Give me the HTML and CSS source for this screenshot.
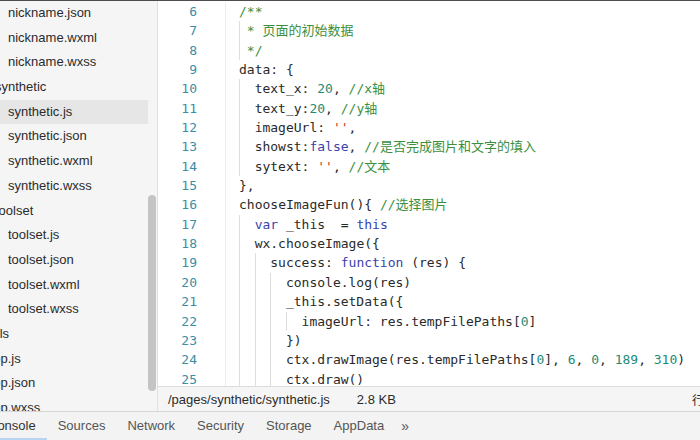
FILE: index.html
```html
<!DOCTYPE html>
<html lang="zh-CN">
<head>
    <meta charset="UTF-8">
    <title>synthetic.js</title>
    <link rel="stylesheet" href="styles.css">
</head>
<body>
    <div class="main">
        <div class="sidebar">
            <div class="tree">
                <div class="row file">nickname.json</div>
                <div class="row file">nickname.wxml</div>
                <div class="row file">nickname.wxss</div>
                <div class="row folder">synthetic</div>
                <div class="row file selected">synthetic.js</div>
                <div class="row file">synthetic.json</div>
                <div class="row file">synthetic.wxml</div>
                <div class="row file">synthetic.wxss</div>
                <div class="row folder">toolset</div>
                <div class="row file">toolset.js</div>
                <div class="row file">toolset.json</div>
                <div class="row file">toolset.wxml</div>
                <div class="row file">toolset.wxss</div>
                <div class="row root">utils</div>
                <div class="row root">app.js</div>
                <div class="row root">app.json</div>
                <div class="row root">app.wxss</div>
            </div>
            <div class="thumb"></div>
        </div>

        <div class="editor">
            <div class="code">
                <div class="gutter">
                    <div>6</div><div>7</div><div>8</div><div>9</div><div>10</div>
                    <div>11</div><div>12</div><div>13</div><div>14</div><div>15</div>
                    <div>16</div><div>17</div><div>18</div><div>19</div><div>20</div>
                    <div>21</div><div>22</div><div>23</div><div>24</div><div>25</div>
                </div>
                <div class="lines">
                    <div class="ln"><span class="c">/**</span></div>
                    <div class="ln"><i class="g g1"></i><span class="c">* 页面的初始数据</span></div>
                    <div class="ln"><i class="g g1"></i><span class="c">*/</span></div>
                    <div class="ln">data: {</div>
                    <div class="ln"><i class="g"></i>text_x: <span class="n">20</span>, <span class="c">//x轴</span></div>
                    <div class="ln"><i class="g"></i>text_y:<span class="n">20</span>, <span class="c">//y轴</span></div>
                    <div class="ln"><i class="g"></i>imageUrl: <span class="s">''</span>,</div>
                    <div class="ln"><i class="g"></i>showst:<span class="k">false</span>, <span class="c">//是否完成图片和文字的填入</span></div>
                    <div class="ln"><i class="g"></i>sytext: <span class="s">''</span>, <span class="c">//文本</span></div>
                    <div class="ln">},</div>
                    <div class="ln">chooseImageFun(){ <span class="c">//选择图片</span></div>
                    <div class="ln"><i class="g"></i><span class="k">var</span> _this  = <span class="k">this</span></div>
                    <div class="ln"><i class="g"></i>wx.chooseImage({</div>
                    <div class="ln"><i class="g"></i><i class="g"></i>success: <span class="k">function</span> (res) {</div>
                    <div class="ln"><i class="g"></i><i class="g"></i><i class="g"></i>console.log(res)</div>
                    <div class="ln"><i class="g"></i><i class="g"></i><i class="g"></i>_this.setData({</div>
                    <div class="ln"><i class="g"></i><i class="g"></i><i class="g"></i><i class="g"></i>imageUrl: res.tempFilePaths[<span class="n">0</span>]</div>
                    <div class="ln"><i class="g"></i><i class="g"></i><i class="g"></i>})</div>
                    <div class="ln"><i class="g"></i><i class="g"></i><i class="g"></i>ctx.drawImage(res.tempFilePaths[<span class="n">0</span>], <span class="n">6</span>, <span class="n">0</span>, <span class="n">189</span>, <span class="n">310</span>)</div>
                    <div class="ln"><i class="g"></i><i class="g"></i><i class="g"></i>ctx.draw()</div>
                </div>
            </div>
            <div class="status">
                <span class="path">/pages/synthetic/synthetic.js</span>
                <span class="size">2.8 KB</span>
                <span class="pos">行 25，列 17</span>
            </div>
        </div>
    </div>

    <div class="tabs">
        <div class="tab active">Console</div>
        <div class="tab">Sources</div>
        <div class="tab">Network</div>
        <div class="tab">Security</div>
        <div class="tab">Storage</div>
        <div class="tab">AppData</div>
        <div class="tab more">»</div>
    </div>
</body>
</html>
```

FILE: styles.css
```css
html, body {
    margin: 0;
    padding: 0;
}
body {
    width: 700px;
    height: 440px;
    overflow: hidden;
    border-top: 1px solid #4d4d4d;
    box-sizing: border-box;
    font-family: 'Liberation Sans', Arial, 'Noto Sans CJK SC', sans-serif;
    font-size: 13px;
    color: #333;
    background-color: #fff;
}
.main {
    display: flex;
    height: 410px;
}
.sidebar {
    position: relative;
    width: 157px;
    flex-shrink: 0;
    background-color: #f5f5f5;
    border-right: 1px solid #e0e0e0;
    overflow: hidden;
}
.tree {
    width: 148px;
}
.row {
    height: 24.7px;
    line-height: 24.7px;
    white-space: nowrap;
    color: #2b2b2b;
}
.row.file {
    padding-left: 8px;
}
.row.folder {
    text-indent: -5px;
}
.row.root {
    text-indent: -14px;
}
.row.selected {
    background-color: #e6e6e6;
}
.thumb {
    position: absolute;
    left: 148px;
    top: 194px;
    width: 8px;
    height: 196px;
    border-radius: 4px;
    background-color: #c4c4c4;
}
.editor {
    flex: 1;
    display: flex;
    flex-direction: column;
    min-width: 0;
}
.code {
    flex: 1;
    display: flex;
    overflow: hidden;
    padding-top: 1px;
    font-family: 'DejaVu Sans Mono', 'Liberation Mono', 'Noto Sans CJK SC', monospace;
    font-size: 13px;
    line-height: 19.35px;
}
.gutter {
    width: 39px;
    padding-right: 28px;
    text-align: right;
    color: #3b8ea6;
    border-right: 1px solid #ececec;
    flex-shrink: 0;
}
.lines {
    padding-left: 13px;
    color: #2a2a2a;
}
.ln {
    white-space: pre;
    height: 19.35px;
}
.g {
    display: inline-block;
    width: 2ch;
    height: 19.35px;
    vertical-align: top;
    box-sizing: border-box;
    border-left: 1px solid #dedede;
}
.g1 {
    width: 1ch;
}
.c {
    color: #3d8f3d;
    font-family: 'DejaVu Sans Mono', 'Noto Sans CJK SC', monospace;
}
.k {
    color: #3a3fae;
}
.n {
    color: #1d8a78;
}
.s {
    color: #c8342c;
}
.status {
    display: flex;
    align-items: center;
    height: 24px;
    border-top: 1px solid #dcdcdc;
    background-color: #f5f5f5;
    padding-left: 10px;
    overflow: hidden;
    white-space: nowrap;
    color: #2b2b2b;
}
.size {
    margin-left: 27px;
}
.pos {
    margin-left: auto;
    width: 8px;
    overflow: hidden;
    font-family: 'Noto Sans CJK SC', sans-serif;
    font-size: 12px;
}
.tabs {
    display: flex;
    height: 29px;
    box-sizing: border-box;
    border-top: 1px solid #d6d6d6;
    background-color: #f3f3f3;
    margin-left: -23px;
}
.tab {
    padding: 0 11px;
    line-height: 28px;
    color: #555;
    white-space: nowrap;
}
.tab.active {
    color: #333;
    box-shadow: inset 0 -2px 0 #b9d3f2;
}
.tab.more {
    font-size: 14px;
    padding-left: 6px;
}
```
